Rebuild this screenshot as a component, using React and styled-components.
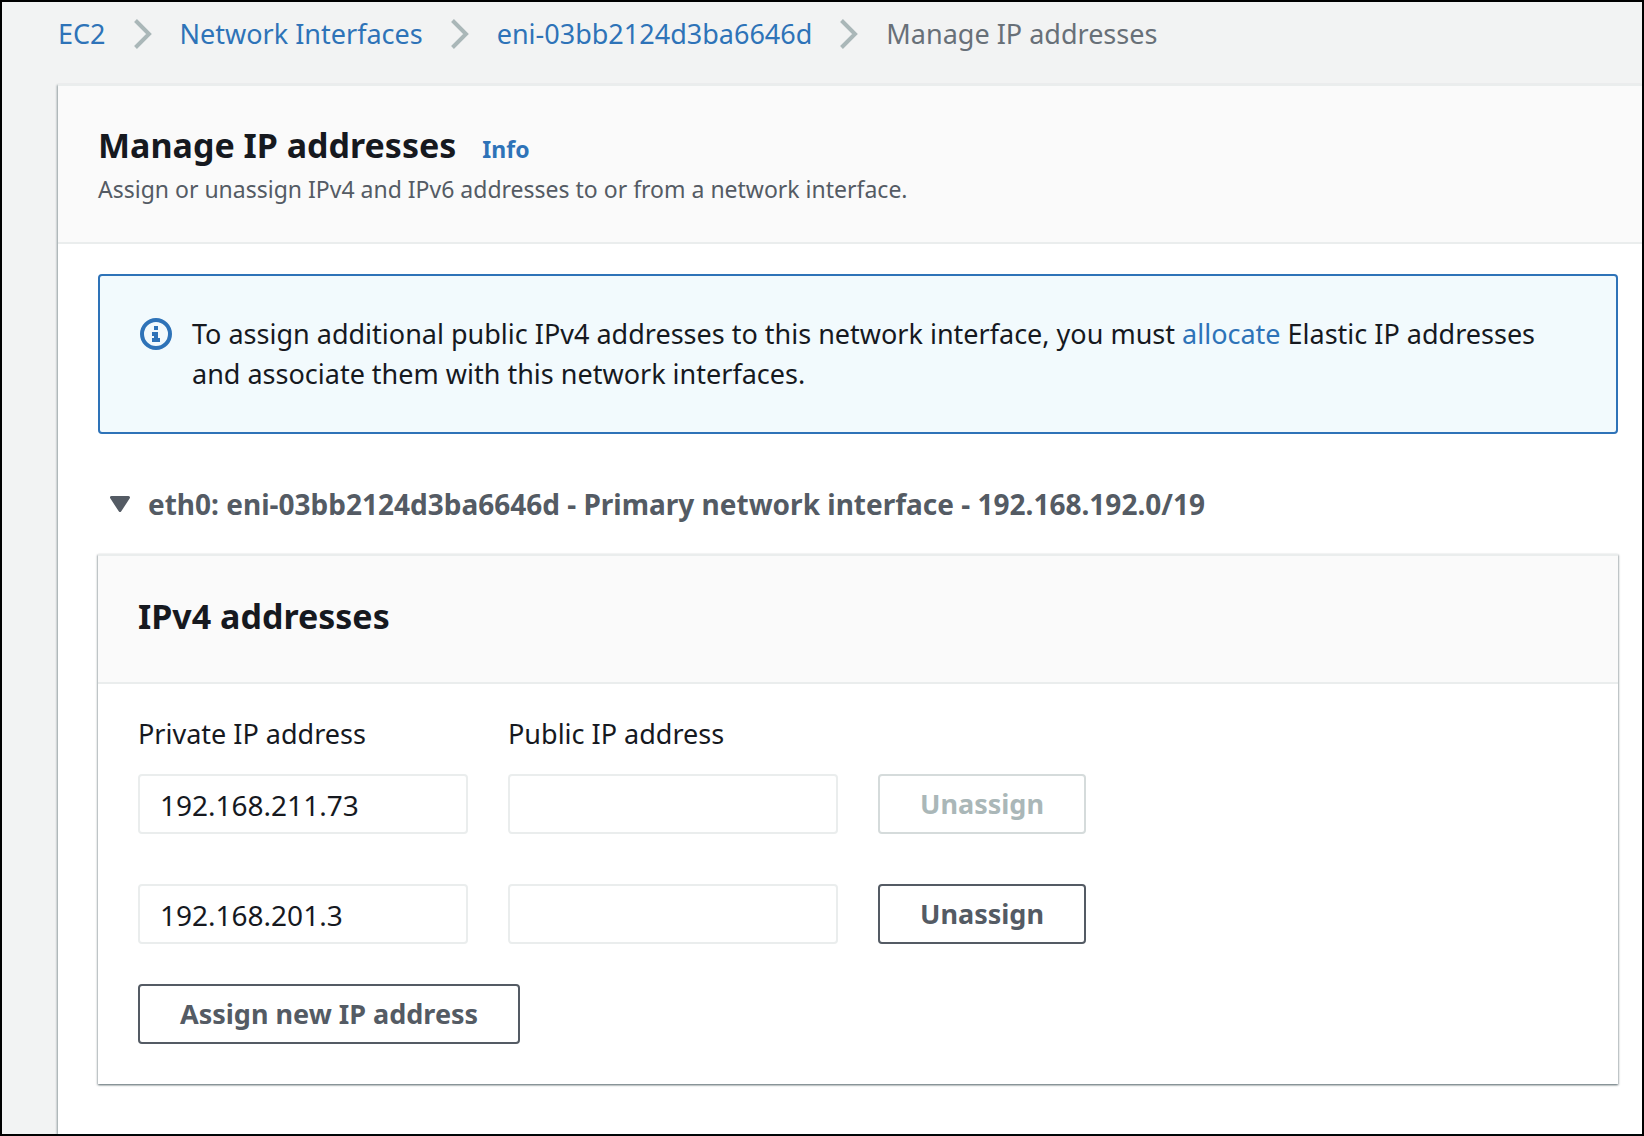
import React, { useState } from 'react'
import styled, { createGlobalStyle } from 'styled-components'

const INTERFACE_ID = 'eni-03bb2124d3ba6646d'

const initialAddresses = [
  { privateIp: '192.168.211.73', publicIp: '', primary: true },
  { privateIp: '192.168.201.3', publicIp: '', primary: false },
]

const Chevron = () => (
  <ChevronIcon viewBox="0 0 18 30" aria-hidden="true">
    <path d="M1.5 1.5 L15 15 L1.5 28.5" />
  </ChevronIcon>
)

const InfoIcon = () => (
  <AlertIcon viewBox="0 0 32 32" aria-hidden="true">
    <circle cx="16" cy="16" r="14" fill="none" stroke="currentColor" strokeWidth="4" />
    <path
      fill="currentColor"
      d="M14 8h4v4h-4z M12 14h6v6h2v4h-8v-4h2v-2h-2z"
    />
  </AlertIcon>
)

const App = () => {
  const [addresses, setAddresses] = useState(initialAddresses)
  const [open, setOpen] = useState(true)

  const update = (index, key, value) =>
    setAddresses(addresses.map((a, i) => (i === index ? { ...a, [key]: value } : a)))

  const unassign = (index) => setAddresses(addresses.filter((a, i) => i !== index))

  const assign = () =>
    setAddresses([...addresses, { privateIp: '', publicIp: '', primary: false }])

  return (
    <Page>
      <GlobalStyle />
      <Breadcrumbs aria-label="Breadcrumbs">
        <Link href="#ec2">EC2</Link>
        <Chevron />
        <Link href="#interfaces">Network Interfaces</Link>
        <Chevron />
        <Link href="#interface">{INTERFACE_ID}</Link>
        <Chevron />
        <span>Manage IP addresses</span>
      </Breadcrumbs>

      <Panel>
        <PanelHeader>
          <TitleRow>
            <Title>Manage IP addresses</Title>
            <InfoLink href="#info">Info</InfoLink>
          </TitleRow>
          <Description>
            Assign or unassign IPv4 and IPv6 addresses to or from a network interface.
          </Description>
        </PanelHeader>

        <PanelBody>
          <Alert>
            <InfoIcon />
            <AlertText>
              To assign additional public IPv4 addresses to this network interface, you must{' '}
              <Link href="#allocate">allocate</Link> Elastic IP addresses and associate them with
              this network interfaces.
            </AlertText>
          </Alert>

          <Expander type="button" aria-expanded={open} onClick={() => setOpen(!open)}>
            <Caret viewBox="0 0 20 16" $open={open} aria-hidden="true">
              <path d="M1.5 1.5 H18.5 L10 14.5 Z" />
            </Caret>
            eth0: {INTERFACE_ID} - Primary network interface - 192.168.192.0/19
          </Expander>

          {open && (
            <Card>
              <CardHeader>
                <Title>IPv4 addresses</Title>
              </CardHeader>
              <CardBody>
                <Labels>
                  <label htmlFor="private-0">Private IP address</label>
                  <label htmlFor="public-0">Public IP address</label>
                </Labels>
                <Rows>
                  {addresses.map((address, i) => (
                    <Row key={i}>
                      <Input
                        id={`private-${i}`}
                        aria-label="Private IP address"
                        value={address.privateIp}
                        onChange={(e) => update(i, 'privateIp', e.target.value)}
                      />
                      <Input
                        id={`public-${i}`}
                        aria-label="Public IP address"
                        value={address.publicIp}
                        onChange={(e) => update(i, 'publicIp', e.target.value)}
                      />
                      <Button
                        type="button"
                        disabled={address.primary}
                        onClick={() => unassign(i)}
                      >
                        Unassign
                      </Button>
                    </Row>
                  ))}
                </Rows>
                <Button type="button" onClick={assign}>
                  Assign new IP address
                </Button>
              </CardBody>
            </Card>
          )}
        </PanelBody>
      </Panel>
    </Page>
  )
}

const GlobalStyle = createGlobalStyle`
  * {
    box-sizing: border-box;
  }

  body {
    margin: 0;
    color: #16191f;
    font-family: 'Noto Sans', 'Open Sans', sans-serif;
    font-size: 27px;
    line-height: 40px;
  }
`

const Page = styled.div`
  display: flex;
  flex-direction: column;
  min-height: 100vh;
  padding-left: 56px;
  border: 2px solid #000;
  background: #f2f3f3;
`

const Breadcrumbs = styled.nav`
  display: flex;
  align-items: center;
  gap: 28px;
  height: 82px;
  padding-bottom: 18px;
  color: #687078;
`

const ChevronIcon = styled.svg`
  flex: none;
  width: 18px;
  height: 30px;
  fill: none;
  stroke: #aab7b8;
  stroke-width: 4;
`

const Link = styled.a`
  color: #2e73b8;
  text-decoration: none;
`

const Panel = styled.main`
  flex: 1;
  border-top: 2px solid #eaeded;
  background: #fff;
  box-shadow: -1px 1px 2px rgba(0, 28, 36, 0.4);
`

const PanelHeader = styled.header`
  padding: 35px 40px 33px;
  border-bottom: 2px solid #eaeded;
  background: #fafafa;
`

const TitleRow = styled.div`
  display: flex;
  align-items: baseline;
  gap: 26px;
`

const Title = styled.h2`
  margin: 0;
  font-size: 34px;
  font-weight: 700;
  line-height: 48px;
`

const InfoLink = styled(Link)`
  font-size: 23px;
  font-weight: 700;
`

const Description = styled.p`
  margin: 0;
  color: #545b64;
  font-size: 23px;
`

const PanelBody = styled.div`
  padding: 30px 24px 48px 40px;
`

const Alert = styled.div`
  display: flex;
  gap: 20px;
  padding: 38px 40px;
  border: 2px solid #2e73b8;
  border-radius: 4px;
  background: #f2fafd;
`

const AlertIcon = styled.svg`
  flex: none;
  width: 32px;
  height: 32px;
  margin-top: 4px;
  color: #2e73b8;
`

const AlertText = styled.p`
  margin: 0;
`

const Expander = styled.button`
  display: flex;
  align-items: center;
  gap: 18px;
  margin: 50px 0 30px;
  padding: 0 12px;
  border: 0;
  background: none;
  color: #545b64;
  font: inherit;
  font-size: 28px;
  font-weight: 700;
  text-align: left;
  cursor: pointer;
`

const Caret = styled.svg`
  flex: none;
  width: 20px;
  height: 16px;
  fill: currentColor;
  stroke: currentColor;
  stroke-width: 3;
  stroke-linejoin: round;
  transform: ${({ $open }) => ($open ? 'none' : 'rotate(-90deg)')};
`

const Card = styled.section`
  border-top: 2px solid #eaeded;
  background: #fff;
  box-shadow: 0 1px 2px rgba(0, 28, 36, 0.5), 1px 1px 2px rgba(0, 28, 36, 0.15),
    -1px 1px 2px rgba(0, 28, 36, 0.15);
`

const CardHeader = styled.header`
  padding: 36px 40px 42px;
  border-bottom: 2px solid #eaeded;
  background: #fafafa;
`

const CardBody = styled.div`
  padding: 30px 40px 40px;
`

const Labels = styled.div`
  display: grid;
  grid-template-columns: 330px 330px;
  gap: 40px;
  margin-bottom: 20px;
`

const Rows = styled.div`
  display: flex;
  flex-direction: column;
  gap: 50px;
  margin-bottom: 40px;
`

const Row = styled.div`
  display: grid;
  grid-template-columns: 330px 330px max-content;
  gap: 40px;
`

const Input = styled.input`
  width: 100%;
  height: 60px;
  padding: 2px 20px 0;
  border: 2px solid #eaeded;
  border-radius: 4px;
  background: #fff;
  color: #16191f;
  font: inherit;
  font-size: 28px;
`

const Button = styled.button`
  height: 60px;
  padding: 0 40px;
  border: 2px solid #545b64;
  border-radius: 4px;
  background: #fff;
  color: #545b64;
  font: inherit;
  font-weight: 700;
  cursor: pointer;

  &:disabled {
    border-color: #d5dbdb;
    color: #aab7b8;
    cursor: default;
  }
`

export default App
